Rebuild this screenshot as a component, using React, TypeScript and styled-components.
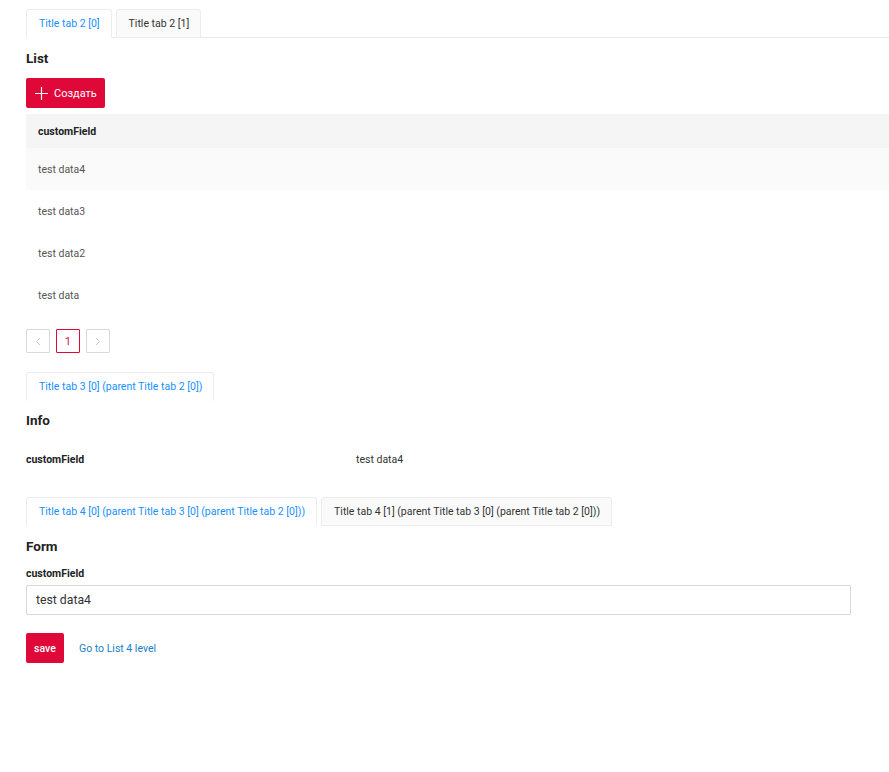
import React from 'react'
import styled, { createGlobalStyle } from 'styled-components'

const Global = createGlobalStyle`
  body {
    margin: 0;
    background: #fff;
    font-family: Roboto, "Liberation Sans", Arial, sans-serif;
    color: #333;
  }
`

const Page = styled.div`
  padding: 9px 0 40px 26px;
`

const TabBar = styled.div<{ underline?: boolean }>`
  display: flex;
  gap: 4px;
  height: 29px;
  border-bottom: 1px solid ${p => (p.underline ? '#e8e8e8' : 'transparent')};
  box-sizing: border-box;
`

const Tab = styled.div<{ active?: boolean }>`
  display: flex;
  align-items: center;
  padding: 0 11px 0 12px;
  font-size: 10.5px;
  height: 29px;
  box-sizing: border-box;
  color: ${p => (p.active ? '#1890ff' : '#333')};
  background: ${p => (p.active ? '#fff' : '#fafafa')};
  border: 1px solid #ececec;
  border-bottom: ${p => (p.active ? '1px solid #fff' : '1px solid #ececec')};
  border-radius: 3px 3px 0 0;
  white-space: nowrap;
`

const Heading = styled.h2<{ top: number }>`
  margin: ${p => p.top}px 0 0;
  font-size: 13.5px;
  line-height: 20px;
  font-weight: 700;
  color: #222;
`

const PrimaryButton = styled.button<{ top: number }>`
  display: flex;
  align-items: center;
  gap: 6px;
  height: 30px;
  margin-top: ${p => p.top}px;
  padding: 0 8px 0 9px;
  border: none;
  border-radius: 2px;
  background: #e00838;
  color: #fff;
  font-family: inherit;
  font-size: 11px;
  cursor: pointer;
`

const Table = styled.div`
  margin-top: 6px;
`

const HeaderRow = styled.div`
  height: 34px;
  display: flex;
  align-items: center;
  padding-left: 12px;
  background: #f5f5f5;
  font-size: 10.5px;
  font-weight: 700;
  color: #222;
`

const Row = styled.div<{ hover?: boolean }>`
  height: 42px;
  display: flex;
  align-items: center;
  padding-left: 12px;
  background: ${p => (p.hover ? '#fafafa' : '#fff')};
  font-size: 10.5px;
  color: #555;
`

const Pager = styled.div`
  display: flex;
  gap: 6px;
  margin-top: 13px;
`

const PageBox = styled.div<{ active?: boolean }>`
  width: 24px;
  height: 24px;
  box-sizing: border-box;
  display: flex;
  align-items: center;
  justify-content: center;
  border: 1px solid ${p => (p.active ? '#e00838' : '#d9d9d9')};
  color: ${p => (p.active ? '#e00838' : '#ccc')};
  font-size: 10.5px;
  border-radius: 1px;
`

const Section = styled.div<{ top: number }>`
  margin-top: ${p => p.top}px;
`

const InfoRow = styled.div`
  display: grid;
  grid-template-columns: 330px 1fr;
  margin-top: 20px;
  font-size: 10.5px;
  line-height: 20px;
`

const InfoLabel = styled.div`
  font-weight: 700;
  color: #222;
`

const InfoValue = styled.div`
  color: #333;
`

const FieldLabel = styled.div`
  margin-top: 8px;
  font-size: 10.5px;
  font-weight: 700;
  line-height: 20px;
  color: #222;
`

const Input = styled.input`
  display: block;
  width: 825px;
  height: 30px;
  margin-top: 1px;
  box-sizing: border-box;
  border: 1px solid #d9d9d9;
  border-radius: 1px;
  padding: 0 9px;
  font-family: inherit;
  font-size: 12.25px;
  color: #333;
  outline: none;
`

const Actions = styled.div`
  display: flex;
  align-items: center;
  gap: 15px;
  margin-top: 18px;
`

const SaveButton = styled.button`
  height: 30px;
  width: 38px;
  padding: 0;
  border: none;
  border-radius: 2px;
  background: #e00838;
  color: #fff;
  font-family: inherit;
  font-size: 10.5px;
  font-weight: 500;
`

const Link = styled.a`
  font-size: 10.5px;
  color: #1a7fc7;
  text-decoration: none;
`

const Plus = () => (
  <svg width="13" height="13" viewBox="0 0 13 13">
    <path d="M6.5 0v13M0 6.5h13" stroke="#fff" strokeWidth="1.2" />
  </svg>
)

const Chevron = ({ dir }: { dir: 'left' | 'right' }) => (
  <svg width="6" height="9" viewBox="0 0 6 9">
    <path
      d={dir === 'left' ? 'M5 1L1.5 4.5 5 8' : 'M1 1l3.5 3.5L1 8'}
      stroke="#c8c8c8"
      strokeWidth="1"
      fill="none"
    />
  </svg>
)

const rows = ['test data4', 'test data3', 'test data2', 'test data']

export default function App() {
  return (
    <>
      <Global />
      <Page>
        <TabBar underline>
          <Tab active>Title tab 2 [0]</Tab>
          <Tab>Title tab 2 [1]</Tab>
        </TabBar>

        <Heading top={10}>List</Heading>
        <PrimaryButton top={10}>
          <Plus />
          Создать
        </PrimaryButton>

        <Table>
          <HeaderRow>customField</HeaderRow>
          {rows.map((r, i) => (
            <Row key={r} hover={i === 0}>
              {r}
            </Row>
          ))}
        </Table>

        <Pager>
          <PageBox><Chevron dir="left" /></PageBox>
          <PageBox active>1</PageBox>
          <PageBox><Chevron dir="right" /></PageBox>
        </Pager>

        <Section top={19}>
          <TabBar>
            <Tab active>Title tab 3 [0] (parent Title tab 2 [0])</Tab>
          </TabBar>
          <Heading top={9}>Info</Heading>
          <InfoRow>
            <InfoLabel>customField</InfoLabel>
            <InfoValue>test data4</InfoValue>
          </InfoRow>
        </Section>

        <Section top={27}>
          <TabBar>
            <Tab active>Title tab 4 [0] (parent Title tab 3 [0] (parent Title tab 2 [0]))</Tab>
            <Tab>Title tab 4 [1] (parent Title tab 3 [0] (parent Title tab 2 [0]))</Tab>
          </TabBar>
          <Heading top={10}>Form</Heading>
          <FieldLabel>customField</FieldLabel>
          <Input defaultValue="test data4" />
          <Actions>
            <SaveButton>save</SaveButton>
            <Link href="#">Go to List 4 level</Link>
          </Actions>
        </Section>
      </Page>
    </>
  )
}
